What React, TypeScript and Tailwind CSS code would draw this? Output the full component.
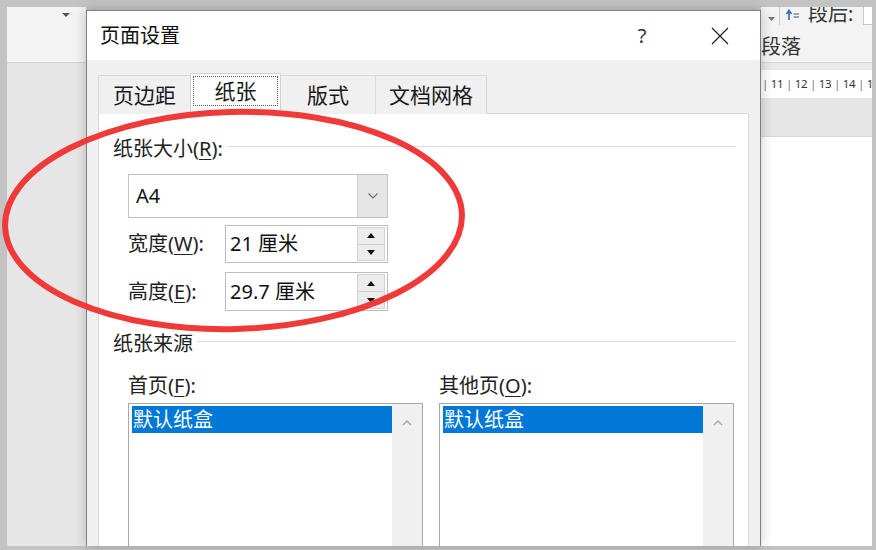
import React from "react";

function UpTri() {
  return (
    <svg width="8" height="5" viewBox="0 0 8 5">
      <path d="M0 5H8L4 0Z" fill="#111" />
    </svg>
  );
}
function DownTri() {
  return (
    <svg width="8" height="5" viewBox="0 0 8 5">
      <path d="M0 0H8L4 5Z" fill="#111" />
    </svg>
  );
}

function Spinner({ value }: { value: string }) {
  return (
    <div className="flex w-[163px] h-full border border-[#bdbdbd] bg-white">
      <div className="flex-1 flex items-center pl-[4px] text-[20px] leading-none text-[#111]">{value}</div>
      <div className="w-[28px] my-[1px] mr-[2px] flex flex-col">
        <div className="flex-1 flex items-center justify-center bg-[#ececec] border border-[#d2d2d2]">
          <UpTri />
        </div>
        <div className="flex-1 flex items-center justify-center bg-[#ececec] border border-t-0 border-[#d2d2d2]">
          <DownTri />
        </div>
      </div>
    </div>
  );
}

function ListBox() {
  return (
    <div className="flex-1 flex border border-b-0 border-[#a8a8a8] bg-white">
      <div className="flex-1 pt-[2px] pl-[3px]">
        <div className="h-[27px] bg-[#0078d7] text-white text-[20px] leading-none flex items-center pl-[1px]">默认纸盒</div>
      </div>
      <div className="w-[30px] bg-[#f0f0f0] flex justify-center pt-[15px]">
        <svg width="10" height="7" viewBox="0 0 10 7">
          <path d="M1 6L5 2L9 6" stroke="#a6a6a6" strokeWidth="1.4" fill="none" />
        </svg>
      </div>
    </div>
  );
}

function Header({ children }: { children: React.ReactNode }) {
  return (
    <div className="flex items-center h-[28px] pl-[14px] pr-[12px]">
      <span className="text-[20px] leading-none text-[#222] whitespace-nowrap">{children}</span>
      <div className="flex-1 h-px bg-[#dcdcdc] ml-[4px] mt-[-6px]" />
    </div>
  );
}

export default function App() {
  return (
    <div className="relative w-[876px] h-[550px] overflow-hidden bg-[#c3c3c3] pt-[7px] pl-[7px] pr-[4px] pb-[4px] font-['Noto_Sans','Noto_Sans_CJK_SC',sans-serif] text-[#1a1a1a]">
      <div className="flex h-full">
        {/* left word strip */}
        <div className="w-[79px] shrink-0 flex flex-col">
          <div className="h-[56px] bg-[#f3f3f3] border-b border-[#d4d4d4] flex justify-end pr-[16px] pt-[6px]">
            <svg width="8" height="4" viewBox="0 0 8 4">
              <path d="M0 0H8L4 4Z" fill="#555" />
            </svg>
          </div>
          <div className="flex-1 bg-[#e6e6e6]" />
        </div>

        {/* dialog */}
        <div className="w-[675px] shrink-0 pt-[3px] flex flex-col relative z-10">
          <div className="flex-1 flex flex-col border border-b-0 border-[#808080] bg-[#f0f0f0] shadow-[0_0_12px_rgba(0,0,0,0.22)]">
            {/* title bar */}
            <div className="h-[49px] bg-white flex items-center pl-[13px] pr-[17px]">
              <div className="flex-1 text-[20px] leading-none text-[#111]">页面设置</div>
              <div className="w-[46px] flex justify-center text-[20px] leading-none text-[#333]">?</div>
              <div className="w-[46px] ml-[32px] flex justify-center">
                <svg width="18" height="18" viewBox="0 0 18 18">
                  <path d="M1 1L17 17M17 1L1 17" stroke="#222" strokeWidth="1.2" />
                </svg>
              </div>
            </div>

            {/* body */}
            <div className="flex-1 flex flex-col pt-[14px] px-[11px]">
              {/* tabs */}
              <div className="flex items-end h-[40px] mb-[-1px] relative z-10">
                <div className="w-[92px] h-[39px] flex items-center justify-center border border-b-0 border-r-0 border-[#d9d9d9] bg-[#f0f0f0] text-[21px] leading-none">页边距</div>
                <div className="relative w-[91px] h-[41px] flex items-center justify-center pb-[6px] border border-b-0 border-[#d2d2d2] bg-white text-[21px] leading-none">
                  纸张
                  <div className="absolute left-[2px] right-[2px] top-[2px] bottom-[8px] border border-dotted border-[#555]" />
                </div>
                <div className="w-[94px] h-[39px] flex items-center justify-center border-t border-[#d9d9d9] bg-[#f0f0f0] text-[21px] leading-none">版式</div>
                <div className="w-[112px] h-[39px] flex items-center justify-center border border-b-0 border-[#d9d9d9] bg-[#f0f0f0] text-[21px] leading-none">文档网格</div>
              </div>

              {/* panel */}
              <div className="flex-1 flex flex-col bg-white border border-b-0 border-[#d9d9d9]">
                <div className="mt-[21px]">
                  <Header>
                    纸张大小(<span className="underline underline-offset-[3px] decoration-1">R</span>):
                  </Header>
                </div>

                <div className="mt-[11px] ml-[29px] w-[260px] h-[44px] flex border border-[#c2c2c2] bg-white">
                  <div className="flex-1 flex items-center pl-[7px] text-[20px] leading-none text-[#111]">A4</div>
                  <div className="w-[30px] bg-[#e5e5e5] border-l border-[#cdcdcd] flex items-center justify-center">
                    <svg width="10" height="6" viewBox="0 0 10 6">
                      <path d="M0.5 0.5L5 5L9.5 0.5" stroke="#6d6d6d" strokeWidth="1.1" fill="none" />
                    </svg>
                  </div>
                </div>

                <div className="mt-[7px] ml-[29px] flex items-center h-[38px]">
                  <div className="w-[97px] text-[20px] leading-none text-[#222]">
                    宽度(<span className="underline underline-offset-[3px] decoration-1">W</span>):
                  </div>
                  <Spinner value="21 厘米" />
                </div>

                <div className="mt-[9px] ml-[29px] flex items-center h-[39px]">
                  <div className="w-[97px] text-[20px] leading-none text-[#222]">
                    高度(<span className="underline underline-offset-[3px] decoration-1">E</span>):
                  </div>
                  <Spinner value="29.7 厘米" />
                </div>

                <div className="mt-[19px]">
                  <Header>纸张来源</Header>
                </div>

                <div className="flex-1 mt-[14px] ml-[29px] flex gap-[16px]">
                  <div className="w-[295px] flex flex-col">
                    <div className="h-[28px] flex items-center text-[20px] leading-none text-[#222]">
                      首页(<span className="underline underline-offset-[3px] decoration-1">F</span>):
                    </div>
                    <div className="mt-[3px] flex-1 flex">
                      <ListBox />
                    </div>
                  </div>
                  <div className="w-[295px] flex flex-col">
                    <div className="h-[28px] flex items-center text-[20px] leading-none text-[#222]">
                      其他页(<span className="underline underline-offset-[3px] decoration-1">O</span>):
                    </div>
                    <div className="mt-[3px] flex-1 flex">
                      <ListBox />
                    </div>
                  </div>
                </div>
              </div>
            </div>
          </div>
        </div>

        {/* right word area */}
        <div className="flex-1 min-w-0 overflow-hidden flex flex-col">
          <div className="h-[56px] bg-[#f3f3f3] border-b border-[#d5d5d5] flex flex-col overflow-hidden">
            <div className="h-[18px] flex items-start">
              <div className="w-[19px] shrink-0 h-[18px] border-r border-[#c8c8c8] flex items-end justify-center pb-[4px] pl-[2px]">
                <svg width="7" height="4" viewBox="0 0 7 4">
                  <path d="M0 0H7L3.5 4Z" fill="#777" />
                </svg>
              </div>
              <div className="ml-[6px] mt-[2px] shrink-0 flex items-center">
                <svg width="14" height="12" viewBox="0 0 14 12">
                  <path d="M3 11V3M0.5 5L3 1.5L5.5 5" stroke="#2b6cc4" strokeWidth="1.6" fill="none" />
                  <path d="M7.5 5H13M7.5 8H13" stroke="#555" strokeWidth="1" />
                </svg>
              </div>
              <div className="ml-[8px] mt-[-3px] shrink-0 text-[20px] leading-[20px] text-[#333] whitespace-nowrap">段后:</div>
              <div className="ml-[10px] flex-1 h-[18px] border-l border-b border-[#c8c8c8] bg-white" />
            </div>
            <div className="mt-[10px] h-[24px] flex items-center text-[20px] leading-none text-[#333] whitespace-nowrap">段落</div>
          </div>
          <div className="h-[7px] bg-[#e9e9e9]" />
          <div className="h-[28px] bg-white flex items-center pl-[1px] text-[11.5px] tracking-[-0.3px] text-[#333] whitespace-nowrap">
            <span className="text-[#777]">|</span>&nbsp;11&nbsp;<span className="text-[#777]">|</span>&nbsp;12&nbsp;<span className="text-[#777]">|</span>&nbsp;13&nbsp;<span className="text-[#777]">|</span>&nbsp;14&nbsp;<span className="text-[#777]">|</span>&nbsp;1
          </div>
          <div className="h-[39px] bg-[#e6e6e6] border-b border-[#d8d8d8]" />
          <div className="flex-1 bg-white" />
        </div>
      </div>

      {/* red annotation ellipse */}
      <svg className="absolute top-0 left-0 z-20 pointer-events-none" width="876" height="550" viewBox="0 0 876 550">
        <ellipse cx="233.5" cy="220.5" rx="228.5" ry="108.5" transform="rotate(-1.5 233.5 220.5)" stroke="#f03a3a" strokeWidth="6" fill="none" />
      </svg>
    </div>
  );
}
